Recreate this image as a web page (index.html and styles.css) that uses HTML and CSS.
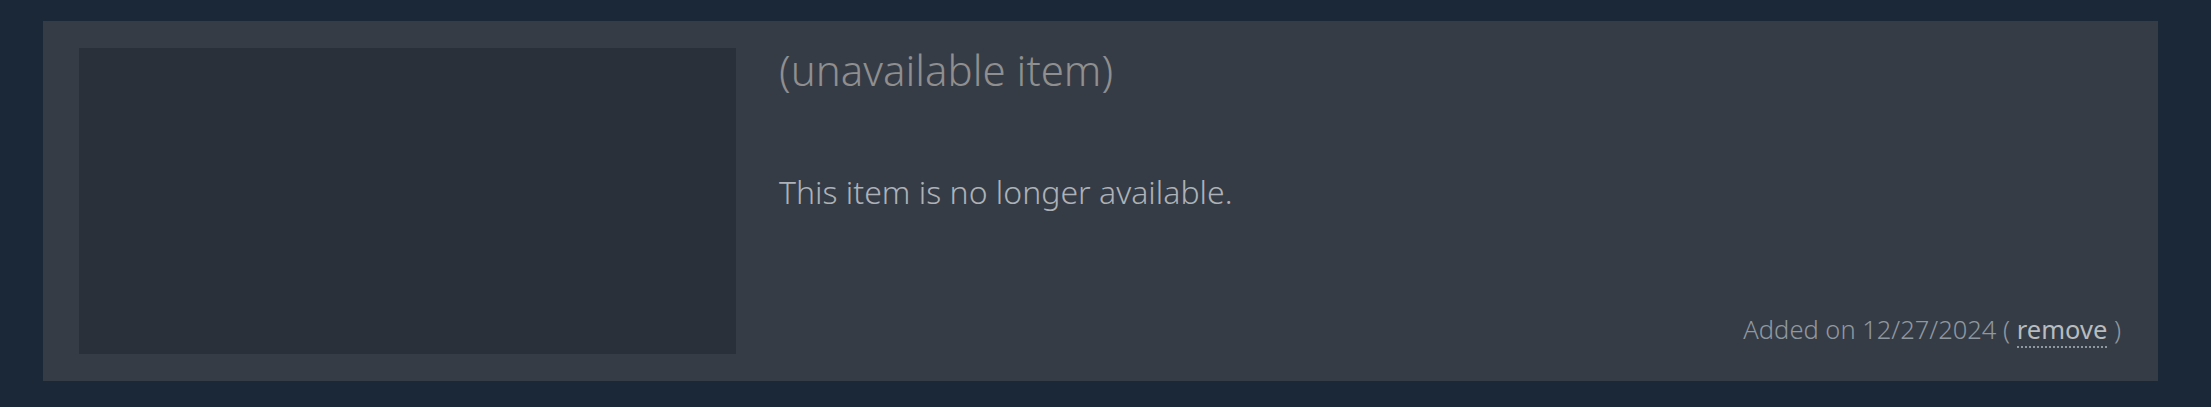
FILE: index.html
```html
<!DOCTYPE html>
<html>
<head>
<meta charset="utf-8">
<link rel="stylesheet" href="styles.css">
</head>
<body>
<div class="page">
  <div class="wish-row">
    <div class="capsule"></div>
    <div class="info">
      <div class="title">(unavailable item)</div>
      <div class="desc">This item is no longer available.</div>
      <div class="footer">Added on 12/27/2024 ( <span class="remove">remove</span> )</div>
    </div>
  </div>
</div>
</body>
</html>
```

FILE: styles.css
```css
html, body {
  margin: 0;
  padding: 0;
  background: #1b2838;
}
body {
  font-family: "Noto Sans", "Open Sans", sans-serif;
}
.page {
  padding: 21px 0 0 43px;
}
.wish-row {
  width: 2115px;
  height: 360px;
  box-sizing: border-box;
  background: #363c46;
  padding: 27px 37px 27px 36px;
  display: flex;
}
.capsule {
  width: 657px;
  height: 306px;
  flex: none;
  background: #2a3039;
}
.info {
  flex: 1;
  margin-left: 43px;
  display: flex;
  flex-direction: column;
}
.title {
  color: #8f8f8f;
  font-size: 42px;
  font-weight: 300;
  line-height: 48px;
  margin-top: -2px;
}
.desc {
  color: #acb2b8;
  font-size: 32px;
  font-weight: 300;
  line-height: 38px;
  margin-top: 79px;
}
.footer {
  margin-top: auto;
  margin-bottom: 10px;
  align-self: flex-end;
  color: #8f98a0;
  font-size: 25.5px;
  font-weight: 300;
  line-height: 30px;
}
.remove {
  color: #b8bcbf;
  font-weight: 400;
  border-bottom: 2px dotted #8f98a0;
}
```
